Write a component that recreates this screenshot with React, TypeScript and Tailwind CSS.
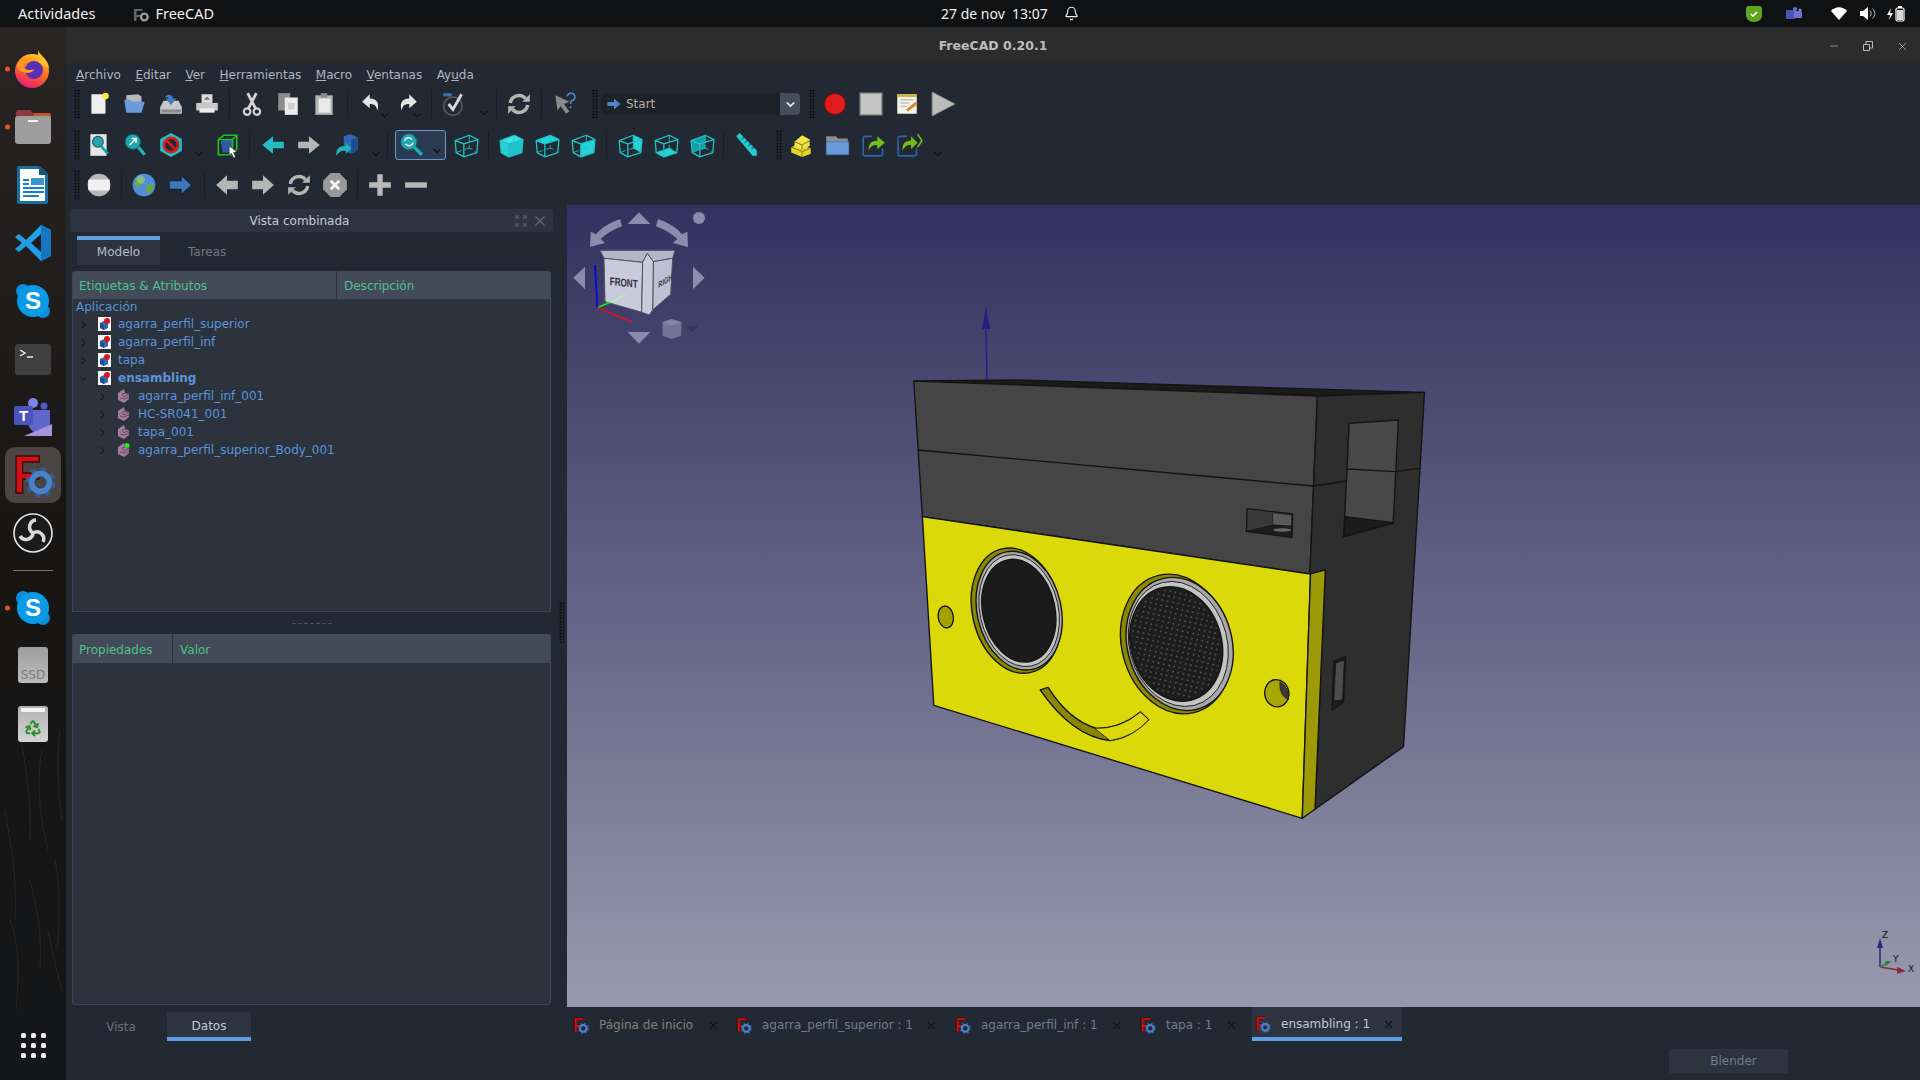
import { ReactNode } from 'react';
import { ChevronDown, ChevronRight, Bell, Recycle, X, Minus } from 'lucide-react';

const ui = "font-['DejaVu_Sans',sans-serif]";

function S({ children, s = 26 }: { children: ReactNode; s?: number }) {
  return <svg width={s} height={s} viewBox="0 0 24 24">{children}</svg>;
}

function FreeCadLogo({ size = 40 }: { size?: number }) {
  return (
    <svg width={size} height={size} viewBox="0 0 48 48" className="overflow-visible">
      <text x="0" y="0" transform="translate(0 46) scale(0.86 1)" fontFamily="Liberation Sans, sans-serif" fontWeight="700" fontSize="64" fill="#d40f14" stroke="#3a0608" strokeWidth="2">F</text>
      <circle cx="33" cy="33" r="15" fill="none" stroke="#2f5f9e" strokeWidth="6" strokeDasharray="5.9 5.9" />
      <circle cx="33" cy="33" r="10.500" fill="none" stroke="#4a82c8" strokeWidth="7" />
      <circle cx="33" cy="33" r="6.500" fill="none" stroke="#1d3a63" strokeWidth="1" />
    </svg>
  );
}

/* toolbar icons */
const I = {
  doc: <S><path d="M5 3h13v18H5z" fill="#eeeeee" /><circle cx="18" cy="4.5" r="3" fill="#ffe93c" /></S>,
  open: <S><path d="M4 4l11-1 3 2v6H4z" fill="#b9b9b9" /><path d="M2 8h6l1 2h12l-3 10H4z" fill="#6a9bdb" /></S>,
  save: <S><path d="M2 15l3-6h14l3 6v6H2z" fill="#c8c8c8" /><path d="M6 6c3-4 7-3 8 1h3l-5 6-5-6h3c-1-1-2-2-4-1z" fill="#3b7ec4" /><rect x="3" y="17" width="18" height="3" fill="#8c8c8c" /></S>,
  print: <S><path d="M7 3h10v8H7z" fill="#dddddd" /><path d="M2 11h20v7H2z" fill="#c8c8c8" /><path d="M5 16h14v4H5z" fill="#ececec" /><path d="M12 5l-3 3h6z" fill="#777" /></S>,
  cut: <S><g fill="none" stroke="#d5d5d5" strokeWidth="2"><circle cx="7.5" cy="19" r="3" /><circle cx="16.5" cy="19" r="3" /><path strokeWidth="2.6" d="M8.5 16.5L16 2M15.5 16.5L8 2" /></g></S>,
  copy: <S><path d="M3 2h11v16H3z" fill="#8d8d8d" /><path d="M9 6h12v16H9z" fill="#ececec" /><path d="M12 11h6v6h-6z" fill="#cfcfcf" /></S>,
  paste: <S><path d="M4 4h16v18H4z" fill="#b5b5b5" /><path d="M9 2h6v4H9z" fill="#8a8a8a" /><path d="M7 7h11v13H7z" fill="#e9e9e9" /></S>,
  undo: <S><path d="M9 3L2 10l7 6v-4c4 0 6 1 7 6 2-6 0-11-7-11z" fill="#e4e4e4" /></S>,
  redo: <S><path d="M15 3l7 7-7 6v-4c-4 0-6 1-7 6-2-6 0-11 7-11z" fill="#e4e4e4" /></S>,
  check: <S><circle cx="11" cy="14" r="8.5" fill="none" stroke="#5c5c5c" strokeWidth="1.4" /><path d="M2 2h8v3H2z" fill="#3d6ea8" /><path d="M7 12l4 5 8-14" fill="none" stroke="#d7d7d7" strokeWidth="2.6" /></S>,
  refresh: <S><g fill="none" stroke="#b4b4b4" strokeWidth="3.2"><path d="M4 11a8 8 0 0 1 14-4" /><path d="M20 13a8 8 0 0 1-14 4" /></g><path d="M15 10h7V3zM9 14H2v7z" fill="#b4b4b4" /></S>,
  help: <S><path d="M4 4l13 6-5 2 5 7-3 2-5-7-3 4z" fill="#8a8a8a" /><path d="M15 5a3.5 3.5 0 1 1 4 4c-1 .7-1 1.5-1 3M18 14v2" fill="none" stroke="#4d86c6" strokeWidth="1.5" /></S>,
  start: <S s={16}><path d="M2 9h10V4l10 8-10 8v-5H2z" fill="#4d84c4" /></S>,
  record: <S s={24}><circle cx="12" cy="12" r="10.5" fill="#e21b1b" stroke="#8c0c0c" strokeWidth="1" /></S>,
  stop: <S s={26}><rect x="2" y="2" width="20" height="20" fill="#c4c4c4" stroke="#8e8e8e" strokeWidth="1.2" /></S>,
  macro: <S><path d="M3 3h18v18H3z" fill="#f2f2ea" /><path d="M3 3h18v2.5H3z" fill="#c9b53a" /><path d="M6 8h12M6 11h8M6 14h6" stroke="#a9a9a9" /><path d="M11 17l9-7 2 2-9 7z" fill="#d9882c" /></S>,
  play: <S><path d="M2 1l21 11L2 23z" fill="#bdbdbd" stroke="#8e8e8e" strokeWidth=".8" /></S>,
  fit: <S><path d="M4 2h15v20H4z" fill="#e6e6e6" /><circle cx="11" cy="9" r="5" fill="#2ea0a8" stroke="#0f666c" /><path d="M14 13l6 7" stroke="#16a6ad" strokeWidth="2.6" /></S>,
  fitSel: <S><circle cx="10" cy="9" r="7" fill="#24a7ad" stroke="#0f666c" /><path d="M7 12l6-6M9 6h4v4" stroke="#eee" strokeWidth="1.6" fill="none" /><path d="M15 14l6 7" stroke="#18b2b8" strokeWidth="3" /></S>,
  noDraw: <S><path d="M12 1l10 5.5v11L12 23 2 17.500v-11z" fill="#21c0c8" /><circle cx="12" cy="12" r="6.500" fill="#222932" stroke="#d41d1d" strokeWidth="2.6" /><path d="M7.500 7.500l9 9" stroke="#d41d1d" strokeWidth="2.6" /></S>,
  bound: <S><path d="M4 7l5-4h12v13l-4 5H4z" fill="none" stroke="#1fc31f" strokeWidth="1.5" /><path d="M6 9l5-3h7v9l-4 4H8z" fill="#2d5b9f" /><path d="M4 7h13v14M17 7l4-4" fill="none" stroke="#1fc31f" strokeWidth="1.2" /><path d="M14 13l7 5-3 1 2 4-2 .7-2-4-2 2z" fill="#fff" stroke="#111" strokeWidth=".5" /></S>,
  tealLeft: <S><path d="M2 12L12 4v5h10v6H12v5z" fill="#22bcc4" /></S>,
  greyRight: <S><path d="M22 12L12 4v5H2v6h10v5z" fill="#b5b5b5" /></S>,
  boxLink: <S><path d="M9 4l6-2 7 3v12l-6 3-7-3z" fill="#2f68b2" /><path d="M16 7v13l6-3V5z" fill="#1d4d8c" /><path d="M2 22c0-7 3-9 9-9v-3l5 5-5 5v-3c-4 0-6 1-9 5z" fill="#22b5bd" /></S>,
  sync: <S><circle cx="10" cy="9" r="7.500" fill="#24a7ad" stroke="#0f666c" /><path d="M6 8a4 4 0 0 1 7-1M14 10a4 4 0 0 1-7 1" stroke="#eee" strokeWidth="1.400" fill="none" /><path d="M15 14l7 7" stroke="#18b2b8" strokeWidth="3" /></S>,
  ruler: <S><path d="M3 4l3-3 16 16v5h-4z" fill="#25cdd6" /><path d="M8 7l2-2M11 10l2-2M14 13l2-2M17 16l2-2" stroke="#0d6a70" /></S>,
  parts: <S><path d="M3 14l6-3 12 4v5l-8 3-10-4z" fill="#e6d42a" /><path d="M6 9l7-6 7 4v6l-7 3-7-3z" fill="#f3e545" /><path d="M6 9l7 3 7-4M13 12v4M3 14l10 4 8-3M13 18v5" stroke="#8f8314" fill="none" /></S>,
  folder: <S><path d="M2 4h9l2 2h9v4H2z" fill="#8d8d8d" /><path d="M2 9h21v12H2z" fill="#6a9bdb" stroke="#3a6aa8" strokeWidth=".5" /></S>,
  link: <S><path d="M10 4H4a2 2 0 0 0-2 2v14a2 2 0 0 0 2 2h14a2 2 0 0 0 2-2v-5" fill="none" stroke="#2a64ad" strokeWidth="1.500" /><path d="M7 17c0-7 3-9 8-9V4l7 6-7 6v-4c-4 0-6 1-8 5z" fill="#74bd1d" /></S>,
  link2: <S><path d="M9 4H3a2 2 0 0 0-2 2v14a2 2 0 0 0 2 2h13a2 2 0 0 0 2-2v-5" fill="none" stroke="#2a64ad" strokeWidth="1.500" /><path d="M5 17c0-7 3-9 8-9V4l6 6-6 6v-4c-4 0-5 1-8 5z" fill="#74bd1d" /><path d="M19 2l4 6-4 6" fill="none" stroke="#74bd1d" strokeWidth="1.500" /></S>,
  web: <S><circle cx="12" cy="12" r="10.500" fill="#b8b8b8" /><rect x="2" y="7" width="20" height="10" rx="1" fill="#f0f0f0" /></S>,
  globe: <S><circle cx="12" cy="12" r="10.500" fill="#4d8fdc" /><path d="M5 6c3-2 7-2 8 0l-2 4-3 1 1 5-3-2-3-4zM14 12l6-1 1 4-4 5-3-3z" fill="#66ab3a" /><circle cx="9" cy="7" r="4" fill="#ffffff" opacity=".25" /></S>,
  blueRight: <S><path d="M23 12l-10 9v-5H2V8h11V3z" fill="#3f76b8" stroke="#10233e" strokeWidth="1" /></S>,
  greyLeft: <S><path d="M2 12l10-9v5h10v8H12v5z" fill="#b5b5b5" /></S>,
  greyRight2: <S><path d="M22 12L12 3v5H2v8h10v5z" fill="#b5b5b5" /></S>,
  stopX: <S><path d="M8 1h8l7 7v8l-7 7H8l-7-7V8z" fill="#9a9a9a" /><path d="M8 8l8 8M16 8l-8 8" stroke="#f4f4f4" strokeWidth="2.600" /></S>,
  plus: <S><path d="M2 9.500h7.500V2h5v7.500H22v5h-7.500V22h-5v-7.500H2z" fill="#b9b9b9" /></S>,
  minus: <S><path d="M2 9.500h20v5H2z" fill="#b9b9b9" /></S>,
};

// isometric wire cube; `face` holds whichever side is filled in
function wireCube(face: ReactNode) {
  return (
    <S>
      {face}
      <g fill="none" stroke="#1fc3c9" strokeWidth="1.200" strokeLinejoin="round">
        <path d="M2 8L15 3L23 7L22 19L10 23L3 19Z" />
        <path d="M2 8L10 11L23 7M10 11V23" />
      </g>
      <path d="M15 3V9M15 12V15M3 19L8 17M11 16L15 15L18 16M20 18L22 19" fill="none" stroke="#1fc3c9" strokeWidth=".8" />
    </S>
  );
}

const cubes = {
  iso: wireCube(null),
  front: wireCube(<><path d="M2 8L10 11V23L3 19Z" fill="#25d3d9" /><path d="M10 11L23 7L22 19L10 23Z" fill="#1ec4ca" /><path d="M2 8L15 3L23 7L10 11Z" fill="#39e3e8" /></>),
  top: wireCube(<path d="M2 8L15 3L23 7L10 11Z" fill="#25d3d9" />),
  right: wireCube(<path d="M10 11L23 7L22 19L10 23Z" fill="#25d3d9" />),
  back: wireCube(<path d="M15 3L23 7L22 19L15 15Z" fill="#25d3d9" />),
  bottom: wireCube(<path d="M3 19L15 15L22 19L10 23Z" fill="#25d3d9" />),
  left: wireCube(<path d="M2 8L15 3V15L3 19Z" fill="#149da3" />),
};

function Cell({ children, drop, className = '' }: { children: ReactNode; drop?: boolean; className?: string }) {
  return (
    <div className={`relative flex h-9 w-9 shrink-0 items-center justify-center ${className}`}>
      {children}
      {drop && <ChevronDown size={11} strokeWidth={3} color="#10141a" className="absolute bottom-[1px] right-[1px]" />}
    </div>
  );
}

const Grip = ({ className = '' }: { className?: string }) => (
  <div className={`h-[30px] w-[6px] shrink-0 bg-[radial-gradient(circle,#12161c_1px,transparent_1.2px)] bg-[length:3px_3px] ${className}`} />
);

const Sep = ({ className }: { className: string }) => (
  <div className={`h-7 w-px shrink-0 bg-[#1a1f27] ${className}`} />
);

const Chevron = ({ className }: { className: string }) => (
  <div className={`flex h-full shrink-0 items-end justify-center pb-[5px] ${className}`}>
    <ChevronDown size={12} strokeWidth={3} color="#10141a" />
  </div>
);

function Toolbar1() {
  return (
    <div className="flex h-[40px] items-center pl-[8px]">
      <Grip className="mr-px" />
      <Cell>{I.doc}</Cell>
      <Cell>{I.open}</Cell>
      <Cell>{I.save}</Cell>
      <Cell>{I.print}</Cell>
      <Sep className="ml-[4px] mr-[4px]" />
      <Cell>{I.cut}</Cell>
      <Cell>{I.copy}</Cell>
      <Cell>{I.paste}</Cell>
      <Sep className="ml-[5px] mr-[7px]" />
      <Cell drop>{I.undo}</Cell>
      <Cell drop className="-ml-[3px]">{I.redo}</Cell>
      <Sep className="ml-[7px] mr-[4px]" />
      <Cell>{I.check}</Cell>
      <Chevron className="w-[24px]" />
      <Sep className="mr-[4px]" />
      <Cell>{I.refresh}</Cell>
      <Sep className="mx-[4px]" />
      <Cell>{I.help}</Cell>
      <Grip className="ml-[10px] mr-[3px]" />
      <div className="flex h-[22px] w-[199px] items-center justify-between rounded-sm bg-[#1d2128] pl-[5px]">
        <div className="flex items-center gap-[4px]">
          {I.start}
          <span className={`${ui} text-[12px] text-[#b5b0a6]`}>Start</span>
        </div>
        <div className="flex h-full w-[20px] items-center justify-center rounded-r-sm bg-[#454e5c]">
          <ChevronDown size={13} strokeWidth={3} color="#e4e7ec" />
        </div>
      </div>
      <Grip className="ml-[9px] mr-[2px]" />
      <Cell>{I.record}</Cell>
      <Cell>{I.stop}</Cell>
      <Cell>{I.macro}</Cell>
      <Cell>{I.play}</Cell>
    </div>
  );
}

function Toolbar2() {
  return (
    <div className="flex h-[41px] items-center pl-[8px]">
      <Grip className="mr-px" />
      <Cell>{I.fit}</Cell>
      <Cell>{I.fitSel}</Cell>
      <Cell>{I.noDraw}</Cell>
      <Chevron className="w-[20px]" />
      <Cell>{I.bound}</Cell>
      <Sep className="ml-[4px] mr-[5px]" />
      <Cell>{I.tealLeft}</Cell>
      <Cell>{I.greyRight}</Cell>
      <Cell className="ml-[2px]">{I.boxLink}</Cell>
      <Chevron className="w-[22px]" />
      <Sep className="mr-[7px]" />
      <div className="relative flex h-[30px] w-[51px] shrink-0 items-center rounded-[3px] border border-[#6a96cc] bg-[#2b3a53] pl-[2px]">
        {I.sync}
        <ChevronDown size={12} strokeWidth={3} color="#10141a" className="absolute bottom-[2px] right-[2px]" />
      </div>
      <Cell className="ml-[2px]">{cubes.iso}</Cell>
      <Sep className="mx-[4px]" />
      <Cell>{cubes.front}</Cell>
      <Cell>{cubes.top}</Cell>
      <Cell>{cubes.right}</Cell>
      <Sep className="mx-[5px]" />
      <Cell>{cubes.back}</Cell>
      <Cell>{cubes.bottom}</Cell>
      <Cell>{cubes.left}</Cell>
      <Sep className="ml-[3px] mr-[4px]" />
      <Cell>{I.ruler}</Cell>
      <Grip className="ml-[12px] mr-px" />
      <Cell>{I.parts}</Cell>
      <Cell>{I.folder}</Cell>
      <Cell className="ml-px">{I.link}</Cell>
      <Cell>{I.link2}</Cell>
      <Chevron className="w-[20px]" />
    </div>
  );
}

function Toolbar3() {
  return (
    <div className="flex h-[40px] items-center pl-[8px]">
      <Grip className="mr-px" />
      <Cell>{I.web}</Cell>
      <Sep className="mx-[4px]" />
      <Cell className="mr-0">{I.globe}</Cell>
      <Cell>{I.blueRight}</Cell>
      <Sep className="ml-[6px] mr-[4px]" />
      <Cell>{I.greyLeft}</Cell>
      <Cell>{I.greyRight2}</Cell>
      <Cell>{I.refresh}</Cell>
      <Cell>{I.stopX}</Cell>
      <Sep className="mx-[4px]" />
      <Cell>{I.plus}</Cell>
      <Cell>{I.minus}</Cell>
    </div>
  );
}

function TopBar() {
  return (
    <div className="relative flex h-[27px] items-center bg-[#101113] font-['Noto_Sans',sans-serif] text-[14.5px] text-[#f0f0f0]">
      <span className="ml-[18px]">Actividades</span>
      <div className="ml-[38px] flex items-center gap-[6px]">
        <svg width="16" height="16" viewBox="0 0 48 48" opacity=".75" className="overflow-visible">
          <text x="0" y="44" fontFamily="Liberation Sans, sans-serif" fontWeight="700" fontSize="48" fill="#8a8a8a">F</text>
          <circle cx="34" cy="33" r="10" fill="none" stroke="#c8c8c8" strokeWidth="7" />
        </svg>
        <span>FreeCAD</span>
      </div>
      <div className="absolute left-[941px] flex items-center gap-[16px] text-[14px]">
        <span>27 de nov&nbsp; 13:07</span>
        <Bell size={15} strokeWidth={1.8} />
      </div>
      <div className="ml-auto flex items-center">
        <svg width="16" height="16" viewBox="0 0 16 16">
          <path d="M3 0h10a3 3 0 0 1 3 3v6c0 4-3 7-8 7s-8-3-8-7V3a3 3 0 0 1 3-3z" fill="#60a51f" />
          <path d="M5 8l2 2 4-4" stroke="#fff" strokeWidth="1.6" fill="none" />
        </svg>
        <svg className="ml-[24px]" width="16" height="14" viewBox="0 0 16 14">
          <rect x="0" y="3" width="9" height="9" rx="1" fill="#4b53bc" />
          <rect x="8" y="4" width="8" height="7" rx="1" fill="#6d74d0" />
          <circle cx="9" cy="2" r="2" fill="#6d74d0" />
          <circle cx="14" cy="3" r="1.500" fill="#7b83eb" />
        </svg>
        <svg className="ml-[29px]" width="16" height="13" viewBox="0 0 16 13">
          <path d="M0 4c4-5 12-5 16 0l-8 9z" fill="#fff" />
        </svg>
        <svg className="ml-[13px]" width="16" height="15" viewBox="0 0 16 15">
          <path d="M0 5h3l5-4v13l-5-4H0z" fill="#fff" />
          <path d="M10 4.500c1.500 1.500 1.500 4.500 0 6M12.500 2.500c3 3 3 7 0 10" stroke="#bbb" fill="none" />
        </svg>
        <svg className="ml-[11px] mr-[15px]" width="18" height="16" viewBox="0 0 18 16">
          <path d="M4 2L0 9h3l-1 5 4-7H3z" fill="#fff" />
          <rect x="9" y="2" width="8" height="13" rx="1.500" fill="none" stroke="#fff" strokeWidth="1.200" />
          <rect x="11" y="0" width="4" height="2" fill="#fff" />
          <rect x="10" y="4" width="6" height="10" fill="#d8d8d8" />
        </svg>
      </div>
    </div>
  );
}

function SkypeIcon() {
  return (
    <svg width="36" height="36" viewBox="0 0 36 36" className="overflow-visible">
      <circle cx="8" cy="8" r="7" fill="#0b8bd9" />
      <circle cx="28" cy="28" r="7" fill="#0b8bd9" />
      <circle cx="18" cy="18" r="16" fill="#0a9ae6" />
      <text x="18" y="26" textAnchor="middle" fontFamily="Liberation Sans, sans-serif" fontWeight="700" fontSize="24" fill="#fff">S</text>
    </svg>
  );
}

const dockIcons: { key: string; dot?: boolean; active?: boolean; icon: ReactNode }[] = [
  {
    key: 'firefox',
    dot: true,
    icon: (
      <svg width="38" height="38" viewBox="0 0 38 38">
        <defs>
          <linearGradient id="ffg" x1="0.7" y1="0" x2="0.3" y2="1">
            <stop offset="0" stopColor="#ffcb2e" />
            <stop offset="0.5" stopColor="#ff6a1f" />
            <stop offset="1" stopColor="#e3197c" />
          </linearGradient>
        </defs>
        <circle cx="18" cy="21" r="17" fill="url(#ffg)" />
        <path d="M24 0c1 5 10 8 11 18L24 12z" fill="#ffbf2b" />
        <circle cx="20" cy="20" r="9" fill="#5b2eb8" />
        <path d="M3 15c3-6 7-5 12-3-4 0-7 3-5 6 2 2 6 3 11 1-3 4-8 5-12 3-4-1-6-4-6-7z" fill="#ff9a22" />
      </svg>
    ),
  },
  {
    key: 'files',
    dot: true,
    icon: (
      <svg width="38" height="36" viewBox="0 0 38 36">
        <path d="M2 4a3 3 0 0 1 3-3h11l3 3h15a3 3 0 0 1 3 3v8H2z" fill="#8a3a3f" />
        <path d="M20 4h14a3 3 0 0 1 3 3v4H20z" fill="#c8552c" />
        <rect x="1" y="7" width="36" height="28" rx="3" fill="#9e9e9e" />
        <rect x="14" y="11" width="10" height="2" fill="#f2f2f2" />
      </svg>
    ),
  },
  {
    key: 'writer',
    icon: (
      <svg width="32" height="38" viewBox="0 0 32 38">
        <path d="M2 0h21l8 8v28a2 2 0 0 1-2 2H2a2 2 0 0 1-2-2V2a2 2 0 0 1 2-2z" fill="#1a6f9e" />
        <path d="M3 3h19l6 6v26H3z" fill="#fff" />
        <path d="M22 0l9 9h-9z" fill="#16557e" />
        <path d="M6 13h6v2H6zM6 17h6v2H6zM6 21h21v2H6zM6 25h21v2H6zM6 29h16v2H6z" fill="#1681c4" />
        <rect x="14" y="12" width="13" height="7" fill="#3a95d0" />
      </svg>
    ),
  },
  {
    key: 'code',
    icon: (
      <svg width="36" height="36" viewBox="0 0 36 36">
        <path d="M26 0l10 5v26l-10 5L11 21l-7 6-4-3 7-6-7-6 4-3 7 6z" fill="#1e9fe6" />
        <path d="M26 9L16 18l10 9z" fill="#1f1c1b" />
        <path d="M26 0l10 5v26l-10 5z" fill="#1577c2" />
      </svg>
    ),
  },
  { key: 'skype', icon: <SkypeIcon /> },
  {
    key: 'terminal',
    icon: (
      <svg width="36" height="31" viewBox="0 0 36 31">
        <rect width="36" height="31" rx="3" fill="#3f3f40" />
        <path d="M5 6l5 3-5 3M12 13h6" stroke="#eee" strokeWidth="1.400" fill="none" />
      </svg>
    ),
  },
  {
    key: 'teams',
    icon: (
      <svg width="38" height="38" viewBox="0 0 38 38" className="overflow-visible">
        <circle cx="19" cy="5" r="5" fill="#7b83eb" />
        <circle cx="30" cy="8" r="3.500" fill="#5059c9" />
        <path d="M14 12h22v12a10 10 0 0 1-22 0z" fill="#5f67c9" />
        <rect x="0" y="8" width="19" height="19" rx="2" fill="#4b53bc" />
        <text x="9.500" y="23" textAnchor="middle" fontFamily="Liberation Sans, sans-serif" fontWeight="700" fontSize="15" fill="#fff">T</text>
        <path d="M10 38l28-12v12z" fill="#a493d8" />
      </svg>
    ),
  },
  { key: 'freecad', dot: true, active: true, icon: <FreeCadLogo size={40} /> },
  {
    key: 'obs',
    icon: (
      <svg width="40" height="40" viewBox="0 0 40 40">
        <circle cx="20" cy="20" r="19" fill="#1a1a1a" stroke="#e6e6e6" strokeWidth="1.600" />
        <g fill="none" stroke="#d8d8d8" strokeWidth="3.500">
          <path d="M20 20a7 7 0 0 1 3-13" />
          <path d="M20 20a7 7 0 0 1 10 9" />
          <path d="M20 20a7 7 0 0 1-13 3" />
        </g>
      </svg>
    ),
  },
];

function DockItem({ dot, active, children, className = 'h-[58px]' }: { dot?: boolean; active?: boolean; children: ReactNode; className?: string }) {
  return (
    <div className={`relative flex w-full shrink-0 items-center justify-center ${className}`}>
      {dot && <span className="absolute left-[5px] top-1/2 h-[5px] w-[5px] -translate-y-1/2 rounded-full bg-[#e9541e]" />}
      {active && <span className="absolute left-[5px] top-px h-[56px] w-[56px] rounded-[10px] bg-[#4a4542]" />}
      <div className="relative flex">{children}</div>
    </div>
  );
}

function Dock() {
  return (
    <div className="relative flex w-[66px] shrink-0 flex-col overflow-hidden bg-gradient-to-b from-[#282524] via-[#181614] to-[#15171a] pt-[13px]">
      <svg className="absolute bottom-[60px] left-0" width="66" height="330" viewBox="0 0 66 330" fill="none" stroke="#4a3520" strokeWidth="1" opacity=".5">
        <path d="M5 120c6 40 12 60 10 110M18 30c4 30 14 70 12 120M42 60c-6 30-2 70 6 100M55 170c4 20 6 50 2 90M10 230c8 20 10 50 6 90M30 190c6 30 12 40 10 90M48 240c4 20 8 40 14 60M60 40c-4 30-2 60 2 90" />
      </svg>
      {dockIcons.map((d) => (
        <DockItem key={d.key} dot={d.dot} active={d.active}>{d.icon}</DockItem>
      ))}
      <div className="mx-[13px] my-[8px] h-px shrink-0 bg-[#77716c]" />
      <DockItem dot><SkypeIcon /></DockItem>
      <DockItem className="h-[56px]">
        <div className="relative flex h-[36px] w-[30px] items-end justify-center rounded-[3px] bg-gradient-to-b from-[#9e9e9e] to-[#bdbdbd] pb-[2px] font-['DejaVu_Sans',sans-serif] text-[12px] leading-none text-[#7c7c7c]">SSD</div>
      </DockItem>
      <DockItem className="h-[62px]">
        <div className="relative flex h-[36px] w-[30px] items-center justify-center rounded-[3px] bg-gradient-to-b from-[#b0b0b0] to-[#d5d5d5] pt-[8px]">
          <span className="absolute left-[3px] right-[3px] top-[2px] h-[4px] rounded-[1px] bg-[#f4f4f4]" />
          <Recycle size={18} strokeWidth={2.6} color="#2c8f2c" />
        </div>
      </DockItem>
      <div className="mb-[7px] mt-auto grid w-fit grid-cols-3 gap-[5px] self-center">
        {Array.from({ length: 9 }, (_, i) => (
          <span key={i} className="h-[5px] w-[5px] rounded-[1.5px] bg-[#eeeeee]" />
        ))}
      </div>
      <div className="h-[15px] shrink-0" />
    </div>
  );
}

function Menu() {
  const items: [string, string, string][] = [
    ['', 'A', 'rchivo'],
    ['', 'E', 'ditar'],
    ['', 'V', 'er'],
    ['', 'H', 'erramientas'],
    ['', 'M', 'acro'],
    ['', 'V', 'entanas'],
    ['Ay', 'u', 'da'],
  ];
  return (
    <div className={`flex h-[21px] items-center gap-[14.5px] pl-[10px] pt-[3px] text-[12px] text-[#aeb6c2] ${ui}`}>
      {items.map(([a, b, c]) => (
        <span key={a + b + c}>{a}<u>{b}</u>{c}</span>
      ))}
    </div>
  );
}

const DocIcon = () => (
  <svg width="13" height="14" viewBox="0 0 13 14" className="shrink-0">
    <rect width="13" height="14" fill="#f5f5f5" />
    <path d="M2 6l4-2 4 2v5l-4 2-4-2z" fill="#2d6cb5" />
    <path d="M6 8v5l-4-2V6z" fill="#1c4e8c" />
    <circle cx="9" cy="4" r="3" fill="#d8171c" />
  </svg>
);

const PartIcon = ({ green }: { green?: boolean }) => (
  <svg width="13" height="14" viewBox="0 0 13 14" className="shrink-0">
    <path d="M1 4l6-4 1 4 4 1v5l-5 4-6-3z" fill="#a47c9f" />
    <path d="M5 5l3-1 4 1-5 3zM3 9l4 1 5-2" fill="none" stroke="#664b63" />
    {green && <circle cx="10" cy="2.500" r="2.500" fill="#34e31c" />}
  </svg>
);

function TreeRow({ label, bold, open, child, green }: { label: string; bold?: boolean; open?: boolean; child?: boolean; green?: boolean }) {
  return (
    <div className={`flex h-[18px] items-center ${child ? 'pl-[23px]' : 'pl-[4px]'}`}>
      {open
        ? <ChevronDown size={13} strokeWidth={2} color="#1a1f26" className="shrink-0" />
        : <ChevronRight size={13} strokeWidth={2} color="#1a1f26" className="shrink-0" />}
      <div className={`ml-[8px] flex items-center ${child ? 'gap-[8px]' : 'gap-[7px]'}`}>
        {child ? <PartIcon green={green} /> : <DocIcon />}
        <span className={bold ? 'font-bold' : ''}>{label}</span>
      </div>
    </div>
  );
}

function LeftColumn() {
  return (
    <div className={`relative flex w-[501px] shrink-0 flex-col pl-[6px] pt-[4px] ${ui}`}>
      <div className="relative -ml-[2px] flex h-[23px] w-[483px] items-center justify-center rounded-[3px] bg-[#2d3440] pr-[24px] text-[12px] text-[#c6ccd4]">
        Vista combinada
        <div className="absolute right-[5px] flex items-center gap-[5px]">
          <svg width="12" height="12" viewBox="0 0 12 12" fill="none" stroke="#4b5462" strokeWidth="1.500">
            <path d="M1 4V1h3M8 1h3v3M11 8v3H8M4 11H1V8M2 2l2 2M10 2L8 4M10 10L8 8M2 10l2-2" />
          </svg>
          <X size={16} color="#5a6370" strokeWidth={2.4} />
        </div>
      </div>
      <div className="mt-[4px] flex h-[29px] pl-[5px] text-[12px]">
        <div className="flex w-[83px] items-center justify-center border-t-4 border-[#5f9fe0] bg-[#2d3440] pb-[2px] text-[#b7bec8]">Modelo</div>
        <div className="ml-[28px] flex items-center pt-[2px] text-[#6f7885]">Tareas</div>
      </div>
      <div className="mt-[6px] flex h-[341px] w-[479px] flex-col rounded-t-[3px] border border-t-0 border-[#3c4552] bg-[#2c333d]">
        <div className="flex h-[28px] shrink-0 items-center rounded-t-[3px] bg-[#434b58] text-[12px] text-[#4fc08d]">
          <div className="flex h-full w-[264px] items-center border-r border-[#2c333d] pl-[6px] pt-[2px]">Etiquetas &amp; Atributos</div>
          <div className="pl-[7px] pt-[2px]">Descripción</div>
        </div>
        <div className="-mt-[2px] text-[12px] text-[#5b93dc]">
          <div className="flex h-[18px] items-center pl-[3px] pt-px">Aplicación</div>
          <TreeRow label="agarra_perfil_superior" />
          <TreeRow label="agarra_perfil_inf" />
          <TreeRow label="tapa" />
          <TreeRow label="ensambling" bold open />
          <TreeRow child label="agarra_perfil_inf_001" />
          <TreeRow child label="HC-SR041_001" />
          <TreeRow child label="tapa_001" />
          <TreeRow child green label="agarra_perfil_superior_Body_001" />
        </div>
      </div>
      <div className="flex h-[22px] w-[479px] items-center justify-center gap-[2px]">
        {Array.from({ length: 7 }, (_, i) => (
          <span key={i} className="h-px w-[4px] bg-[#4a5361]" />
        ))}
      </div>
      <div className="flex h-[371px] w-[479px] flex-col rounded-b-[3px] border border-t-0 border-[#3c4552] bg-[#2c333d]">
        <div className="flex h-[29px] shrink-0 items-center rounded-t-[3px] bg-[#434b58] text-[12px] text-[#4fc08d]">
          <div className="flex h-full w-[100px] items-center border-r border-[#2c333d] pl-[6px] pt-[3px]">Propiedades</div>
          <div className="pl-[7px] pt-[3px]">Valor</div>
        </div>
      </div>
      <div className="mt-[7px] flex h-[29px] text-[12px]">
        <div className="flex w-[95px] items-center justify-center pl-[3px] text-[#68727f]">Vista</div>
        <div className="flex w-[84px] items-center justify-center border-b-4 border-[#5f9fe0] bg-[#2d3440] pt-[3px] text-[#c3cad3]">Datos</div>
      </div>
      <div className="absolute left-[493px] top-[397px] h-[41px] w-[5px] bg-[radial-gradient(circle,#12161c_1px,transparent_1.2px)] bg-[length:3px_3px]" />
    </div>
  );
}

const navFill = '#8b8bae';

function Canvas() {
  return (
    <svg className="absolute inset-0" width="1353" height="802" viewBox="0 0 1353 802">
      {/* navigation cube, drawn at 3x */}
      <g transform="translate(3 0) scale(0.3333)">
        <path d="M207 22L173 57H241Z" fill={navFill} />
        <path d="M150 42Q100 60 78 88L62 80L60 126L105 114L92 102Q118 78 156 64Z" fill={navFill} />
        <path d="M264 42Q314 60 336 88L352 80L354 126L309 114L322 102Q296 78 258 64Z" fill={navFill} />
        <circle cx="387" cy="39" r="18" fill={navFill} />
        <path d="M45 185L10 218L45 253Z" fill={navFill} />
        <path d="M369 185L404 218L369 253Z" fill={navFill} />
        <path d="M173 381H241L207 416Z" fill={navFill} />
        <path d="M277 352L305 342L335 352L333 392L305 402L278 392Z" fill="#73739a" />
        <path d="M277 352L305 342L335 352L305 362Z" fill="#8383a8" />
        <path d="M349 364H385L367 381Z" fill="#35355a" />
        <path d="M90 136H315L308 160L250 170L232 145L218 172L102 160Z" fill="#b4b5c9" stroke="#50505e" strokeWidth="3" />
        <path d="M102 160L218 172L215 322L105 290Z" fill="#c9cadc" stroke="#50505e" strokeWidth="3" />
        <path d="M250 170L308 160L302 268L248 315Z" fill="#bfc0d4" stroke="#50505e" strokeWidth="3" />
        <path d="M218 172L232 145L250 170L248 315L238 330L215 322Z" fill="#c9cadc" stroke="#50505e" strokeWidth="3" />
        <text x="0" y="0" transform="translate(119 240) skewY(6) scale(0.72 1)" fontFamily="Liberation Sans, sans-serif" fontWeight="700" fontSize="34" fill="#2e2e36">FRONT</text>
        <text x="0" y="0" transform="translate(265 250) skewY(-32) scale(0.65 1)" fontFamily="Liberation Sans, sans-serif" fontWeight="700" fontSize="26" fill="#3a3a44">RIGHT</text>
        <path d="M120 292L165 270" stroke="#b6f2b6" strokeWidth="5" />
        <path d="M82 308L120 292" stroke="#22e022" strokeWidth="5" />
        <path d="M75 180L82 308" stroke="#0000ee" strokeWidth="5" />
        <path d="M82 308L185 350" stroke="#e01010" strokeWidth="5" />
      </g>

      {/* z axis of the part */}
      <path d="M420 178L419 122" stroke="#22227f" strokeWidth="1.500" />
      <path d="M419 101L423 124L415 124Z" fill="#22227f" />

      {/* the enclosure, drawn from a crop of 1568 x 1410 */}
      <g transform="translate(333 165) scale(0.3444 0.3333)" stroke="#141414" strokeWidth="4" strokeLinejoin="round">
        <path d="M40 33L340 30L1523 67L1212 78Z" fill="#1b1b1b" />
        <path d="M40 33L1212 78L1190 612L65 440Z" fill="#454545" />
        <path d="M1212 78L1523 67L1462 1130L1205 1318L1235 600L1190 612Z" fill="#2e2e2e" />
        <path d="M52 240L1200 348L1296 333" fill="none" />
        <path d="M1437 305L1507 295" fill="none" />
        <path d="M1304 160L1447 150L1432 460L1288 500L1298 297Z" fill="#484848" />
        <path d="M1298 297L1437 305" fill="none" />
        <path d="M1294 440L1432 458L1288 500Z" fill="#1c1c1c" />
        <path d="M1008 416L1140 432L1138 502L1006 484Z" fill="#3a3a3a" />
        <path d="M1082 428L1138 435L1136 468L1082 465Z" fill="#5a5a5a" strokeWidth="2" />
        <path d="M1082 465L1138 470L1138 502L1006 484Z" fill="#1d1d1d" strokeWidth="2" />
        <ellipse cx="1110" cy="480" rx="26" ry="5" fill="#6a6a6a" stroke="none" />
        <path d="M1260 875L1294 860L1288 995L1255 1020Z" fill="#1e1e1e" />
        <path d="M1265 880L1290 870L1285 990L1260 992Z" fill="#4d4d4d" strokeWidth="2" />

        <path d="M65 440L1192 612L1168 1345L98 1006Z" fill="#dbd90a" />
        <path d="M1192 612L1235 600L1205 1318L1168 1345Z" fill="#9c9a06" />

        <ellipse cx="338" cy="722" rx="128" ry="190" transform="rotate(-12 338 722)" fill="#8a8800" />
        <ellipse cx="346" cy="722" rx="122" ry="180" transform="rotate(-12 346 722)" fill="#a8a8a8" />
        <ellipse cx="346" cy="722" rx="114" ry="170" transform="rotate(-12 346 722)" fill="#c4c4c4" strokeWidth="2.500" />
        <ellipse cx="345" cy="722" rx="105" ry="156" transform="rotate(-12 345 722)" fill="#1b1b1b" />

        <ellipse cx="802" cy="822" rx="158" ry="212" transform="rotate(-14 802 822)" fill="#8a8800" />
        <ellipse cx="812" cy="822" rx="152" ry="202" transform="rotate(-14 812 822)" fill="#a8a8a8" />
        <ellipse cx="808" cy="822" rx="142" ry="190" transform="rotate(-14 808 822)" fill="#c4c4c4" strokeWidth="2.500" />
        <ellipse cx="802" cy="822" rx="132" ry="174" transform="rotate(-14 802 822)" fill="#1d1d1d" />
        <defs>
          <pattern id="mesh" width="22" height="22" patternUnits="userSpaceOnUse" patternTransform="rotate(-18)">
            <circle cx="6" cy="6" r="2.500" fill="#5e5e5e" stroke="none" />
            <circle cx="17" cy="17" r="2.500" fill="#5e5e5e" stroke="none" />
          </pattern>
        </defs>
        <ellipse cx="802" cy="822" rx="126" ry="166" transform="rotate(-14 802 822)" fill="url(#mesh)" stroke="none" />

        <ellipse cx="133" cy="741" rx="22" ry="33" transform="rotate(-8 133 741)" fill="#a5a200" />
        <ellipse cx="1094" cy="970" rx="35" ry="41" transform="rotate(-8 1094 970)" fill="#a8a600" />
        <path d="M1103 936Q1130 950 1128 990Q1100 975 1103 936Z" fill="#3a3a44" strokeWidth="2" />

        <path d="M407 960L430 952Q490 1050 570 1075Q640 1075 698 1026L722 1049Q670 1105 610 1112Q500 1100 407 960Z" fill="#8a8600" />
        <path d="M565 1075Q640 1078 698 1026L722 1049Q680 1100 610 1112Z" fill="#dbd90a" strokeWidth="2.500" />
      </g>

      {/* corner axis */}
      <g transform="translate(-567 -205)">
        <path d="M1880 967L1880 944" stroke="#2a2a85" strokeWidth="1.500" />
        <path d="M1880 938L1883 948H1877Z" fill="#2a2a85" />
        <path d="M1880 967L1898 970" stroke="#8a2a3a" strokeWidth="1.500" />
        <path d="M1906 971L1897 974L1897 967Z" fill="#8a2a3a" />
        <path d="M1880 967L1888 963" stroke="#2a8a3a" strokeWidth="1.500" />
        <path d="M1892 961L1886 966L1885 961Z" fill="#2a8a3a" />
        <g fontFamily="DejaVu Sans, sans-serif" fontSize="9" fill="#111">
          <text x="1882" y="938">Z</text>
          <text x="1893" y="962">Y</text>
          <text x="1908" y="972">X</text>
        </g>
      </g>
    </svg>
  );
}

const tabs = [
  { label: 'Página de inicio', w: 'w-[163px]', mr: 'mr-[15px]', text: 'text-[#857f78]' },
  { label: 'agarra_perfil_superior : 1', w: 'w-[219px]', mr: 'mr-[16px]', text: 'text-[#6d7c90]' },
  { label: 'agarra_perfil_inf : 1', w: 'w-[185px]', mr: 'mr-[16px]', text: 'text-[#6d7c90]' },
  { label: 'tapa : 1', w: 'w-[113px]', mr: 'mr-[14px]', text: 'text-[#6d7c90]' },
];

function DocTabs() {
  return (
    <div className={`flex h-[34px] shrink-0 pl-[5px] text-[12px] ${ui}`}>
      {tabs.map((t) => (
        <div key={t.label} className={`flex items-center pt-[2px] ${t.w}`}>
          <div className="flex items-center gap-[11px] pl-[1px]"><FreeCadLogo size={15} /><span className={t.text}>{t.label}</span></div>
          <X size={13} strokeWidth={2} color="#12161c" className={`ml-auto ${t.mr}`} />
        </div>
      ))}
      <div className="flex w-[150px] items-center border-b-4 border-[#5f9fe0] bg-[#2d3440] pl-[3px] pt-[4px]">
        <div className="flex items-center gap-[11px]"><FreeCadLogo size={15} /><span className="text-[#c3cad3]">ensambling : 1</span></div>
        <X size={13} strokeWidth={2} color="#12161c" className="ml-auto mr-[7px]" />
      </div>
    </div>
  );
}

export default function App() {
  return (
    <div className="flex h-screen w-screen flex-col overflow-hidden bg-[#232932]">
      <TopBar />
      <div className="flex min-h-0 flex-1">
        <Dock />
        <div className="flex min-w-0 flex-1 flex-col">
          <div className="relative flex h-[36px] shrink-0 items-center justify-center bg-[#2c2c2c] pt-[2px]">
            <span className={`${ui} text-[12.5px] font-bold text-[#bdbdbd]`}>FreeCAD 0.20.1</span>
            <div className="absolute right-[11px] flex items-center gap-[23px] text-[#b8b8b8]">
              <Minus size={12} strokeWidth={1.4} />
              <svg width="10" height="10" viewBox="0 0 10 10" fill="none" stroke="currentColor"><path d="M.5 3.500h6v6h-6zM3 3.500V.5h6.500V7H7" /></svg>
              <X size={13} strokeWidth={1.4} />
            </div>
          </div>
          <Menu />
          <Toolbar1 />
          <Toolbar2 />
          <Toolbar3 />
          <div className="flex min-h-0 flex-1">
            <LeftColumn />
            <div className="flex min-w-0 flex-1 flex-col">
              <div className="relative h-[802px] shrink-0 bg-gradient-to-b from-[#33325f] to-[#9a9aae]">
                <Canvas />
              </div>
              <DocTabs />
              <div className="flex flex-1 items-start justify-end pr-[132px] pt-[8px]">
                <div className={`flex h-[24px] w-[119px] items-center justify-center bg-[#2d3440] pl-[10px] text-[12px] text-[#6f7d8e] ${ui}`}>Blender</div>
              </div>
            </div>
          </div>
        </div>
      </div>
    </div>
  );
}
